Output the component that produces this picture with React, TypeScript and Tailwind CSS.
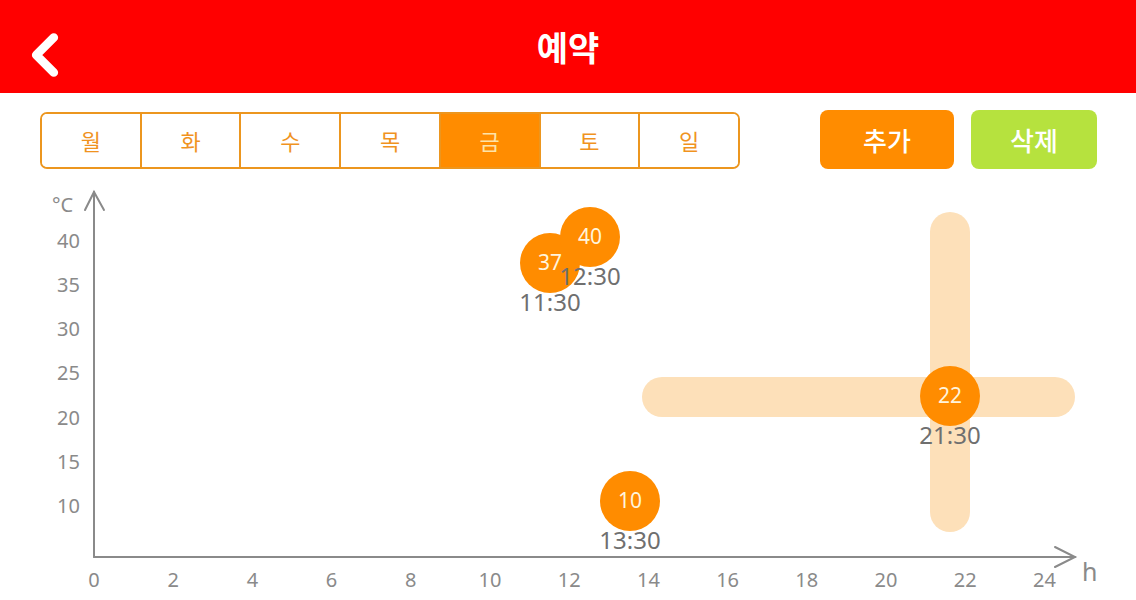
import { ChevronLeft } from 'lucide-react'

const days = ['월', '화', '수', '목', '금', '토', '일']
const selectedDay = '금'

const points = [
  { temp: 37, time: '11:30', x: 550, y: 263 },
  { temp: 40, time: '12:30', x: 590, y: 237 },
  { temp: 10, time: '13:30', x: 630, y: 501 },
  { temp: 22, time: '21:30', x: 950, y: 396 },
]

// chart scale
const xOf = (h: number) => 94 + 39.6 * h
const yOf = (t: number) => 506 - (t - 10) * 8.84

function Chart() {
  const font = '"Noto Sans", "Open Sans", sans-serif'
  return (
    <svg viewBox="0 180 1136 420" width={1136} height={420} className="block">
      {/* crosshair on selected point */}
      <rect x={642} y={377} width={433} height={40} rx={20} fill="#fde0b9" />
      <rect x={930} y={212} width={40} height={320} rx={20} fill="#fde0b9" />

      {/* axes */}
      <g stroke="#8a8a8a" strokeWidth={2} fill="none" strokeLinecap="round">
        <line x1={94} y1={557} x2={94} y2={192} />
        <polyline points="85,210 94,192 104,210" />
        <line x1={94} y1={557} x2={1075} y2={557} />
        <polyline points="1055,547 1075,557 1055,567" />
      </g>

      <g fill="#8a8a8a" fontFamily={font} fontSize={20}>
        <text x={52} y={212}>°C</text>
        <text x={1082} y={581} fontSize={25}>h</text>
        {[40, 35, 30, 25, 20, 15, 10].map((t) => (
          <text key={t} x={80} y={yOf(t) + 7} textAnchor="end">
            {t}
          </text>
        ))}
        {[0, 2, 4, 6, 8, 10, 12, 14, 16, 18, 20, 22, 24].map((h) => (
          <text key={h} x={xOf(h)} y={587} textAnchor="middle">
            {h}
          </text>
        ))}
      </g>

      {points.map((p) => (
        <g key={p.time} fontFamily={font}>
          <circle cx={p.x} cy={p.y} r={30} fill="#ff8c00" />
          <text x={p.x} y={p.y + 7} textAnchor="middle" fill="#fff4dc" fontSize={21}>
            {p.temp}
          </text>
          <text x={p.x} y={p.y + 48} textAnchor="middle" fill="#6f6f6f" fontSize={24}>
            {p.time}
          </text>
        </g>
      ))}
    </svg>
  )
}

export default function App() {
  const kr = { fontFamily: '"Noto Sans CJK KR", "Noto Sans", sans-serif' }
  return (
    <div className="w-[1136px] h-[600px] bg-white overflow-hidden" style={kr}>
      {/* Header */}
      <div className="relative h-[93px] bg-[#ff0000] flex items-center justify-center">
        <ChevronLeft className="absolute left-[10px] top-[20px] text-white" size={70} strokeWidth={3} />
        <span className="text-white text-[34px] font-bold leading-none">예약</span>
      </div>

      {/* Day tabs + buttons */}
      <div className="flex items-start h-[87px] pl-[40px] pt-[17px]">
        <div className="mt-[2px] flex w-[700px] h-[57px] border-2 border-[#ec961f] rounded-[7px] overflow-hidden">
          {days.map((d, i) => (
            <div
              key={d}
              className={
                'flex-1 flex items-center justify-center text-[22px] ' +
                (i > 0 ? 'border-l-2 border-[#ec961f] ' : '') +
                (d === selectedDay ? 'bg-[#ff8c00] text-[#fde3a8]' : 'bg-white text-[#f0931f]')
              }
            >
              {d}
            </div>
          ))}
        </div>
        <button className="ml-[80px] w-[134px] h-[59px] rounded-[8px] bg-[#ff8c00] text-white text-[26px] font-medium">
          추가
        </button>
        <button className="ml-[17px] w-[126px] h-[59px] rounded-[8px] bg-[#b6e23e] text-white text-[26px] font-medium">
          삭제
        </button>
      </div>

      <Chart />
    </div>
  )
}
